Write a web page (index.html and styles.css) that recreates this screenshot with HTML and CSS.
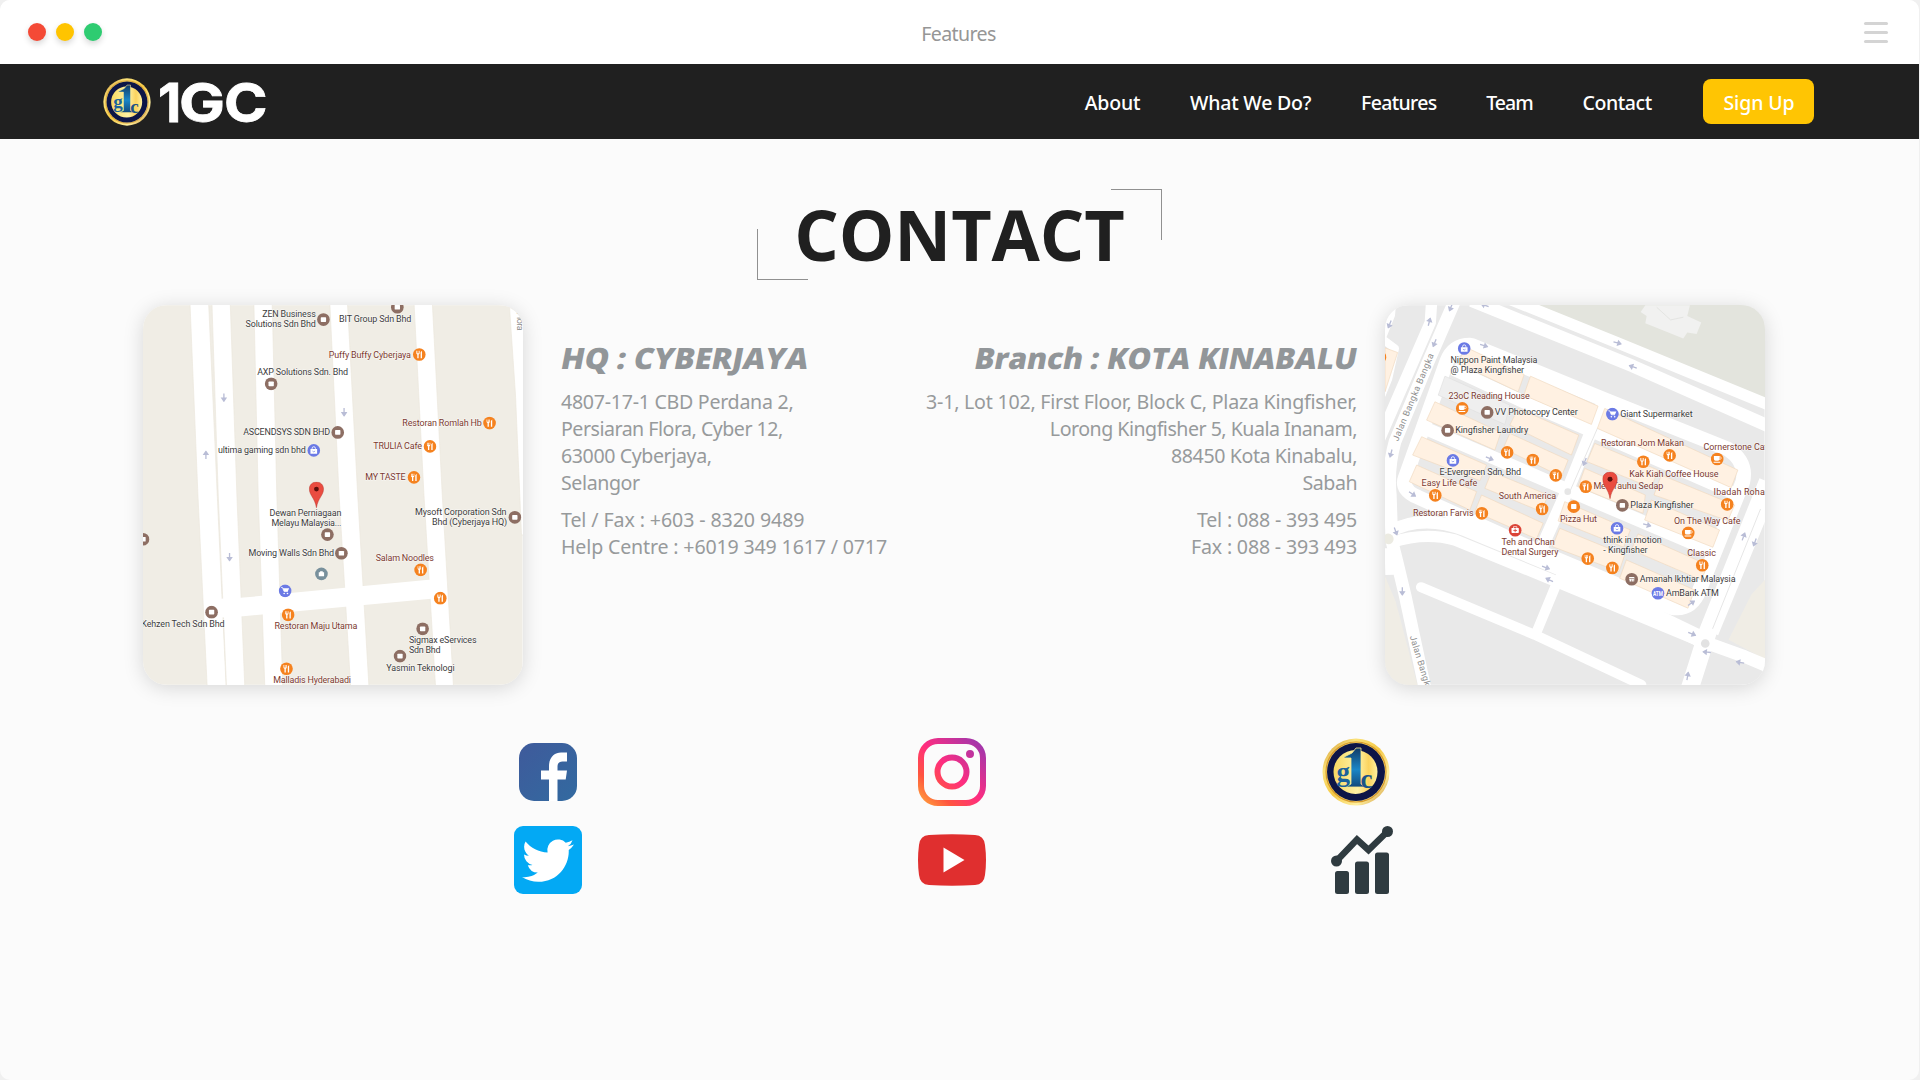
FILE: index.html
```html
<!DOCTYPE html>
<html lang="en">
<head>
<meta charset="utf-8">
<title>Features</title>
<link rel="stylesheet" href="styles.css">
</head>
<body>
<svg class="defs" width="0" height="0" aria-hidden="true">
  <defs>
    <linearGradient id="gold" x1="0" y1="0" x2="1" y2="1"><stop offset="0" stop-color="#c98a22"/><stop offset=".25" stop-color="#fbe27a"/><stop offset=".5" stop-color="#f5c945"/><stop offset=".75" stop-color="#fff0a0"/><stop offset="1" stop-color="#c07c1b"/></linearGradient>
    <linearGradient id="face" x1="0" y1="0" x2="1" y2="0"><stop offset="0" stop-color="#f7d862"/><stop offset=".55" stop-color="#fff2a6"/><stop offset=".8" stop-color="#fbd35e"/><stop offset="1" stop-color="#fff0a0"/></linearGradient>
    <linearGradient id="blue" x1="0" y1="0" x2="0" y2="1"><stop offset="0" stop-color="#123a66"/><stop offset=".55" stop-color="#1a86c7"/><stop offset="1" stop-color="#134a7c"/></linearGradient>
    <symbol id="emblem" viewBox="0 0 68 68">
      <circle cx="34" cy="34" r="33.5" fill="url(#gold)"/>
      <circle cx="34" cy="34" r="30" fill="none" stroke="#d79a2b" stroke-width="1.2"/>
      <circle cx="34" cy="34" r="29" fill="#0d1547"/>
      <circle cx="33.500" cy="34" r="22" fill="url(#face)"/>
      <path d="M22 19 30 15 34 10h5v36l4 3H24l5-3V20h-7z" fill="url(#blue)" stroke="#fbe88f" stroke-width=".8"/>
      <text x="14.500" y="43" font-family="Liberation Serif, serif" font-weight="700" font-size="27" fill="#1b639b">g</text>
      <text x="38.500" y="49.500" font-family="Liberation Serif, serif" font-weight="700" font-size="27" fill="#1b5288">c</text>
    </symbol>
    <symbol id="food" viewBox="-20 -20 40 40" width="40" height="40"><circle r="19" fill="#f5821f"/><path d="M-9-11v7q0 3 3 4v11h4V0q3-1 3-4v-7h-2v7h-2v-7h-2v7h-2v-7zM4 11V1Q2-8 8-11V11z" fill="#fff"/></symbol>
    <symbol id="biz" viewBox="-20 -20 40 40" width="40" height="40"><circle r="19" fill="#8d6e63"/><rect x="-8" y="-7" width="16" height="14" rx="2" fill="#fff"/></symbol>
    <symbol id="bag" viewBox="-20 -20 40 40" width="40" height="40"><circle r="19" fill="#6b7ae5"/><path d="M-10-4H10V10H-10z" fill="#fff"/><path d="M-5-3v-3a5 5 0 0 1 10 0v3" fill="none" stroke="#fff" stroke-width="2.500"/><path d="M-4 2q4 5 8 0" fill="none" stroke="#6b7ae5" stroke-width="2"/></symbol>
    <symbol id="cart" viewBox="-20 -20 40 40" width="40" height="40"><circle r="19" fill="#6b7ae5"/><path d="M-12-10h4l5 12H8" fill="none" stroke="#fff" stroke-width="2.500"/><path d="M-7-8H12L8 1H-3z" fill="#fff"/><circle cx="-3" cy="8" r="2.500" fill="#fff"/><circle cx="7" cy="8" r="2.500" fill="#fff"/></symbol>
    <symbol id="cup" viewBox="-20 -20 40 40" width="40" height="40"><circle r="19" fill="#f5821f"/><path d="M-10-9H7v9q0 5-5 5h-7q-5 0-5-5zM-11 8H9v3h-20z" fill="#fff"/><circle cx="8" cy="-3" r="4" fill="none" stroke="#fff" stroke-width="2"/></symbol>
    <symbol id="pin" viewBox="0 0 46 82"><path d="M23 1C10 1 1 10 1 23c0 20 17 27 22 58 5-31 22-38 22-58C45 10 36 1 23 1z" fill="#ea4c40" stroke="#b8352c" stroke-width="1.500"/><circle cx="23" cy="23" r="7.500" fill="#5b0f0b"/></symbol>
    <symbol id="arrow" viewBox="-14 -14 28 28"><path d="M-12 0H6M2-6 11 0 2 6z" fill="#b9bdd6" stroke="#b9bdd6" stroke-width="4"/></symbol>
  </defs>
</svg>

<div class="window">
  <header class="titlebar">
    <div class="lights"><i class="light red"></i><i class="light yellow"></i><i class="light green"></i></div>
    <span class="title">Features</span>
    <div class="burger"><i></i><i></i><i></i></div>
  </header>

  <nav class="nav">
    <a class="brand">
      <svg class="brand-emblem" width="48" height="50"><use href="#emblem" width="48" height="50"/></svg>
      <svg class="brand-name" width="116" height="50" viewBox="0 0 116 50"><text y="44.500" x="2">1</text><text y="44.500" x="23" textLength="46" lengthAdjust="spacingAndGlyphs">G</text><text y="44.500" x="68" textLength="43.500" lengthAdjust="spacingAndGlyphs">C</text></svg>
    </a>
    <div class="links">
      <a class="s2">About</a>
      <a class="s2">What We Do?</a>
      <a class="s7">Features</a>
      <a class="s10">Team</a>
      <a class="s4">Contact</a>
    </div>
    <a class="signup s1">Sign Up</a>
  </nav>

  <main class="page">
    <h1 class="heading">CONTACT</h1>

    <section class="offices">
      <svg class="map" viewBox="39 30 1140 1140">
        <rect x="39" y="30" width="1140" height="1140" fill="#f0ede5"/>
        <g fill="#fff" stroke="#ebe7dd" stroke-width="2">
          <path d="M180 20 204 600 232 1180H289L262 600 236 20z"/>
          <path d="M246 20 265 600 290 1180H345L321 600 301 20z"/>
          <path d="M372 20 385 600 405 1180H459L441 600 427 20z"/>
          <path d="M600 20 628 600 663 1180H718L684 600 653 20z"/>
          <path d="M853 20 883 600 918 1180H972L938 600 908 20z"/>
          <path d="M1140 36Q1160 44 1168 60L1190 60V720H1176L1158 300z"/>
        </g>
        <path d="M270 912 332 909 905 854 905 912 332 965 275 968z" fill="#fff"/>
        <g>
          <use href="#arrow" x="-14" y="-14" width="28" height="28" transform="translate(282 307) rotate(90)"/>
          <use href="#arrow" x="-14" y="-14" width="28" height="28" transform="translate(643 351) rotate(90)"/>
          <use href="#arrow" x="-14" y="-14" width="28" height="28" transform="translate(228 480) rotate(-90)"/>
          <use href="#arrow" x="-14" y="-14" width="28" height="28" transform="translate(299 786) rotate(90)"/>
        </g>
        <g>
          <use href="#biz" x="561" y="53"/><use href="#biz" x="783" y="16"/><use href="#food" x="849" y="158"/><use href="#biz" x="404" y="246"/><use href="#biz" x="604" y="392"/><use href="#bag" x="532" y="446"/><use href="#food" x="1060" y="364"/><use href="#food" x="881" y="434"/><use href="#food" x="833" y="527"/>
          <use href="#biz" x="1136" y="647"/><use href="#biz" x="573" y="699"/><use href="#biz" x="19" y="713"/><use href="#biz" x="615" y="755"/><use href="#food" x="853" y="805"/><use href="#cart" x="446" y="868"/><use href="#food" x="912" y="890"/><use href="#biz" x="225" y="932"/><use href="#food" x="455" y="940"/><use href="#biz" x="859" y="982"/><use href="#biz" x="791" y="1064"/><use href="#food" x="450" y="1102"/>
        </g>
        <circle cx="575" cy="837" r="19" fill="#78909c"/><path d="M567 832h4v-3h8v3h4v12h-16z" fill="#fff"/>
        <g class="label">
          <text x="397" y="65" textLength="161">ZEN Business</text><text x="347" y="95" textLength="211">Solutions Sdn Bhd</text>
          <text x="628" y="80" textLength="217">BIT Group Sdn Bhd</text><text x="382" y="239" textLength="273">AXP Solutions Sdn. Bhd</text>
          <text x="340" y="421" textLength="261">ASCENDSYS SDN BHD</text><text x="264" y="475" textLength="264">ultima gaming sdn bhd</text>
          <text x="419" y="662" textLength="216">Dewan Perniagaan</text><text x="425" y="692" textLength="210">Melayu Malaysia...</text>
          <text x="856" y="660" textLength="275">Mysoft Corporation Sdn</text><text x="907" y="690" textLength="226">Bhd (Cyberjaya HQ)</text>
          <text x="356" y="783" textLength="257">Moving Walls Sdn Bhd</text><text x="34" y="996" textLength="250">Kehzen Tech Sdn Bhd</text>
          <text x="838" y="1046" textLength="203">Sigmax eServices</text><text x="838" y="1076" textLength="95">Sdn Bhd</text><text x="770" y="1128" textLength="205">Yasmin Teknologi</text>
        </g>
        <g class="label eat">
          <text x="597" y="187" textLength="247">Puffy Buffy Cyberjaya</text><text x="818" y="392" textLength="239">Restoran Romlah Hb</text>
          <text x="731" y="462" textLength="146">TRULIA Cafe</text><text x="707" y="556" textLength="121">MY TASTE</text>
          <text x="738" y="797" textLength="175">Salam Noodles</text><text x="434" y="1004" textLength="249">Restoran Maju Utama</text><text x="430" y="1166" textLength="234">Malladis Hyderabadi</text>
        </g>
        <text class="road" transform="translate(1162 52) rotate(90)" textLength="54">Flora</text>
        <use href="#pin" x="537" y="560" width="46" height="79"/>
      </svg>

      <address class="office">
        <h2><svg width="246" height="40"><text transform="translate(-1.5 30) skewX(-11)" textLength="247" lengthAdjust="spacingAndGlyphs">HQ : CYBERJAYA</text></svg></h2>
        <p><span class="s3">4807-17-1 CBD Perdana 2,</span><br><span class="s5">Persiaran Flora, Cyber 12,</span><br><span class="s4">63000 Cyberjaya,</span><br><span class="s4">Selangor</span></p>
        <p><span class="s1">Tel / Fax : +603 - 8320 9489</span><br><span class="s16">Help Centre : +6019 349 1617 / 0717</span></p>
      </address>

      <address class="office right">
        <h2><svg width="384" height="40"><text transform="translate(0 30) skewX(-11)" textLength="382" lengthAdjust="spacingAndGlyphs">Branch : KOTA KINABALU</text></svg></h2>
        <p><span class="s23">3-1, Lot 102, First Floor, Block C, Plaza Kingfisher,</span><br><span class="s5">Lorong Kingfisher 5, Kuala Inanam,</span><br><span class="s4">88450 Kota Kinabalu,</span><br><span class="s5">Sabah</span></p>
        <p><span class="s2">Tel : 088 - 393 495</span><br><span class="s2">Fax : 088 - 393 493</span></p>
      </address>

      <svg class="map" viewBox="30 30 1140 1140">
        <rect x="30" y="30" width="1140" height="1140" fill="#e9e9e9"/>
        <path d="M470 20H1180V330z" fill="#e3e4dd"/>
        <path d="M812 30H946L938 62 980 82 966 116 938 112 926 130 812 84 816 62 798 50z" fill="#f1f1f0"/><path d="M846 36 888 74 926 66" fill="none" stroke="#dddeda" stroke-width="2"/>
        <path d="M20 820 62 920 130 1180H20zM1180 845 1130 900 1062 1035 1110 1060 1180 1098z" fill="#f0ede5"/>
        <g fill="none" stroke="#fff" stroke-width="40" stroke-linejoin="round">
          <path d="M410 14 728 143 1180 328" stroke-width="34"/>
          <path d="M290 16 775 213 1180 392" stroke-width="38"/>
          <path d="M170 20 166 82 45 360 10 440" stroke-width="34"/>
          <path d="M238 20 160 200 60 440Q38 520 46 600L50 720" stroke-width="38"/>
          <path d="M52 20 48 60 20 130 60 160 40 250 20 300" stroke-width="24"/>
          <path d="M90 550 215 200Q235 148 290 150L700 318 1060 462Q1118 500 1105 560L975 885Q950 948 890 938L480 765 130 607Q78 585 90 550z" stroke-width="44"/>
          <path d="M140 395 580 585 1020 772"/><path d="M235 222 450 322 660 412 1090 600" stroke-width="38"/><path d="M686 318 585 570 500 760" stroke-width="38"/>
          <path d="M40 712Q140 655 270 705L560 825 990 1045" stroke-width="38"/><path d="M50 742Q150 710 240 735L550 862 990 1045" stroke-width="34"/>
          <path d="M550 825 995 1040" stroke-width="50"/>
          <path d="M1180 560 1000 1010 946 1180" stroke-width="54"/><path d="M1190 590 1015 1015" stroke-width="34"/>
          <path d="M985 1040 1110 1085 1180 1115" stroke-width="38"/>
          <path d="M138 877 480 1020 800 1170" stroke-width="30" stroke-linecap="round"/><path d="M552 850 484 1015" stroke-width="30"/>
          <path d="M46 720 66 800 90 900 150 1180" stroke-width="38"/><path d="M42 760 44 840" stroke-width="26"/>
        </g>
        <path d="M1158 642 1014 1002M668 400 586 588" stroke="#e6e6e6" stroke-width="3"/>
        <g class="building">
          <path d="M270 155 448 238 430 290 250 205zM467 243 670 333 650 388 447 300zM180 320 378 412 360 465 155 375zM430 340 612 420 590 480 405 390zM405 415 580 495 560 545 385 460zM140 425 335 510 315 557 113 480zM125 510 305 590 285 645 103 560zM350 530 520 600 500 650 330 580zM320 600 505 685 485 732 300 650z"/>
          <path d="M690 340 1090 525 1070 578 668 400zM660 445 850 525 830 578 637 500zM630 520 812 600 805 655 610 575zM860 540 1080 630 1060 677 838 600zM830 615 1035 705 1015 757 810 675zM570 620 767 705 747 757 550 678zM555 700 750 780 733 830 533 755zM790 717 1000 810 980 855 770 765zM755 795 960 885 940 940 735 850zM30 158 68 172 30 290z"/>
        </g>
        <path d="M210 243 405 330 390 388 190 300z" fill="#efefef" stroke="#dfdfdf" stroke-width="2"/>
        <circle cx="40" cy="732" r="16" fill="#ecebe2"/><circle cx="579" cy="590" r="10" fill="#e6e6e6"/><circle cx="992" cy="1046" r="13" fill="#e2e2e2"/>
        <g>
          <use href="#arrow" x="-14" y="-14" width="28" height="28" transform="translate(728 143) rotate(15)"/><use href="#arrow" x="-14" y="-14" width="28" height="28" transform="translate(775 215) rotate(200)"/><use href="#arrow" x="-14" y="-14" width="28" height="28" transform="translate(327 151) rotate(18)"/><use href="#arrow" x="-14" y="-14" width="28" height="28" transform="translate(330 30) rotate(200)"/><use href="#arrow" x="-14" y="-14" width="28" height="28" transform="translate(163 80) rotate(-75)"/><use href="#arrow" x="-14" y="-14" width="28" height="28" transform="translate(179 143) rotate(112)"/><use href="#arrow" x="-14" y="-14" width="28" height="28" transform="translate(228 36) rotate(112)"/><use href="#arrow" x="-14" y="-14" width="28" height="28" transform="translate(44 87) rotate(112)"/><use href="#arrow" x="-14" y="-14" width="28" height="28" transform="translate(48 475) rotate(105)"/><use href="#arrow" x="-14" y="-14" width="28" height="28" transform="translate(344 490) rotate(22)"/><use href="#arrow" x="-14" y="-14" width="28" height="28" transform="translate(630 500) rotate(112)"/><use href="#arrow" x="-14" y="-14" width="28" height="28" transform="translate(112 597) rotate(35)"/><use href="#arrow" x="-14" y="-14" width="28" height="28" transform="translate(62 709) rotate(70)"/><use href="#arrow" x="-14" y="-14" width="28" height="28" transform="translate(82 889) rotate(90)"/><use href="#arrow" x="-14" y="-14" width="28" height="28" transform="translate(817 690) rotate(15)"/><use href="#arrow" x="-14" y="-14" width="28" height="28" transform="translate(513 818) rotate(20)"/><use href="#arrow" x="-14" y="-14" width="28" height="28" transform="translate(524 855) rotate(205)"/><use href="#arrow" x="-14" y="-14" width="28" height="28" transform="translate(952 1017) rotate(22)"/><use href="#arrow" x="-14" y="-14" width="28" height="28" transform="translate(997 1072) rotate(185)"/><use href="#arrow" x="-14" y="-14" width="28" height="28" transform="translate(1097 1103) rotate(190)"/><use href="#arrow" x="-14" y="-14" width="28" height="28" transform="translate(939 1144) rotate(-80)"/><use href="#arrow" x="-14" y="-14" width="28" height="28" transform="translate(950 925) rotate(-35)"/><use href="#arrow" x="-14" y="-14" width="28" height="28" transform="translate(1107 725) rotate(-70)"/><use href="#arrow" x="-14" y="-14" width="28" height="28" transform="translate(1141 742) rotate(110)"/>
        </g>
        <g>
          <use href="#bag" x="248" y="140"/><use href="#cup" x="242" y="320"/><use href="#biz" x="317" y="332"/><use href="#biz" x="198" y="386"/><use href="#food" x="377" y="452"/><use href="#food" x="454" y="475"/><use href="#food" x="523" y="521"/><use href="#bag" x="214" y="476"/><use href="#cart" x="693" y="337"/><use href="#food" x="865" y="461"/><use href="#food" x="786" y="480"/><use href="#cup" x="1008" y="472"/><use href="#food" x="613" y="555"/><use href="#food" x="161" y="581"/><use href="#food" x="-5" y="166"/>
          <use href="#food" x="301" y="635"/><use href="#food" x="482" y="622"/><use href="#biz" x="723" y="611"/><use href="#food" x="1038" y="608"/><use href="#cup" x="921" y="694"/><use href="#bag" x="707" y="680"/><use href="#food" x="619" y="771"/><use href="#food" x="693" y="799"/><use href="#food" x="963" y="791"/><use href="#biz" x="751" y="833"/>
        </g>
        <path d="M763 851h16M764 854v8M771 854v8M778 854v8" stroke="#8d6e63" stroke-width="2"/>
        <circle cx="597" cy="635" r="19" fill="#f5821f"/><rect x="589" y="627" width="16" height="15" rx="2" fill="#fff"/>
        <circle cx="421" cy="706" r="19" fill="#db4437"/><rect x="410" y="699" width="22" height="15" rx="2" fill="#fff"/><path d="M421 701v11M415.500 706.500h11" fill="none" stroke="#db4437" stroke-width="2.500"/><path d="M416 699v-4h10v4" fill="none" stroke="#fff" stroke-width="2"/>
        <circle cx="850" cy="895" r="19" fill="#6b7ae5"/><text class="atm" x="835" y="903" textLength="30" lengthAdjust="spacingAndGlyphs">ATM</text>
        <g class="label">
          <text x="227" y="205" textLength="261">Nippon Paint Malaysia</text><text x="227" y="235" textLength="221">@ Plaza Kingfisher</text><text x="360" y="360" textLength="249">VV Photocopy Center</text><text x="241" y="414" textLength="219">Kingfisher Laundry</text><text x="194" y="541" textLength="245">E-Evergreen Sdn, Bhd</text><text x="737" y="366" textLength="217">Giant Supermarket</text>
          <text x="767" y="640" textLength="190">Plaza Kingfisher</text><text x="686" y="744" textLength="175">think in motion</text><text x="686" y="775" textLength="133">- Kingfisher</text><text x="795" y="862" textLength="288">Amanah Ikhtiar Malaysia</text><text x="874" y="904" textLength="159">AmBank ATM</text>
        </g>
        <g class="label eat">
          <text x="221" y="311" textLength="244">23oC Reading House</text><text x="679" y="452" textLength="249">Restoran Jom Makan</text><text x="987" y="464" textLength="206">Cornerstone Cafe</text><text x="764" y="545" textLength="268">Kak Kiah Coffee House</text><text x="656" y="583" textLength="210">Mee Tauhu Sedap</text><text x="140" y="573" textLength="167">Easy Life Cafe</text><text x="1017" y="599" textLength="176">Ibadah Rohani</text><text x="372" y="613" textLength="172">South America</text><text x="114" y="664" textLength="182">Restoran Farvis</text><text x="556" y="680" textLength="111">Pizza Hut</text><text x="898" y="686" textLength="200">On The Way Cafe</text><text x="380" y="750" textLength="160">Teh and Chan</text><text x="380" y="780" textLength="171">Dental Surgery</text><text x="938" y="782" textLength="86">Classic</text>
        </g>
        <text class="road" transform="translate(69 440) rotate(-67.500)" textLength="282">Jalan Bangka Bangka</text>
        <text class="road" transform="translate(104 1025) rotate(73)" textLength="172">Jalan Bangka</text>
        <use href="#pin" x="683" y="530" width="46" height="82"/>
      </svg>
    </section>

    <section class="social">
      <svg width="60" height="60" viewBox="0 0 60 60"><defs><linearGradient id="fb" x1="0" y1="0" x2="1" y2="1"><stop offset="0" stop-color="#3f5a9b"/><stop offset="1" stop-color="#326aa0"/></linearGradient></defs><rect x="1" y="1" width="58" height="58" rx="15" fill="url(#fb)"/><path d="M31 59V37.500h-8v-9h8V24c0-9 6-13.500 12-13.500h6v9h-4.500c-3.500 0-5 2-5 5v4H49l-1.300 9h-8.200V59z" fill="#fff"/></svg>
      <svg width="68" height="68" viewBox="0 0 68 68"><defs><linearGradient id="ig" x1="0" y1="1" x2="1" y2="0"><stop offset="0" stop-color="#ffb03a"/><stop offset=".25" stop-color="#ff543f"/><stop offset=".5" stop-color="#ff2d80"/><stop offset="1" stop-color="#9038b4"/></linearGradient></defs><path fill="url(#ig)" fill-rule="evenodd" d="M20 0h28a20 20 0 0 1 20 20v28a20 20 0 0 1-20 20H20A20 20 0 0 1 0 48V20A20 20 0 0 1 20 0zm0 6A14 14 0 0 0 6 20v28a14 14 0 0 0 14 14h28a14 14 0 0 0 14-14V20A14 14 0 0 0 48 6zM34 16.500a17.500 17.500 0 1 1 0 35 17.500 17.500 0 0 1 0-35zm0 6a11.500 11.500 0 1 0 0 23 11.500 11.500 0 0 0 0-23zM52 12a4 4 0 1 1 0 8 4 4 0 0 1 0-8z"/></svg>
      <svg width="68" height="68"><use href="#emblem" width="68" height="68"/></svg>
      <svg width="68" height="68" viewBox="0 0 68 68"><rect width="68" height="68" rx="9" fill="#03a9f4"/><path transform="translate(8 8.600) scale(2.170)" fill="#fff" d="M23.950 4.570a10 10 0 0 1-2.820.780 4.960 4.960 0 0 0 2.160-2.730c-.950.550-2 .960-3.130 1.180a4.920 4.920 0 0 0-8.380 4.480C7.690 8.100 4.070 6.130 1.640 3.160a4.820 4.820 0 0 0-.670 2.480c0 1.710.870 3.210 2.190 4.100a4.900 4.900 0 0 1-2.230-.620v.060a4.920 4.920 0 0 0 3.950 4.830 5 5 0 0 1-2.210.080 4.940 4.940 0 0 0 4.600 3.420A9.870 9.870 0 0 1 0 19.540a14 14 0 0 0 7.550 2.210c9.050 0 14-7.500 14-13.980 0-.210 0-.420-.020-.630a9.940 9.940 0 0 0 2.420-2.570z"/></svg>
      <svg width="68" height="52" viewBox="0 0 68 52"><path d="M11 1Q34-.5 57 1 66 1.500 67 11 69 26 67 41 66 50.500 57 51 34 52.500 11 51 2 50.500 1 41-1 26 1 11 2 1.500 11 1z" fill="#e02f2f"/><path d="M25.500 13.500 46.500 26l-21 12.500z" fill="#fff"/></svg>
      <svg class="chart" width="62" height="68" viewBox="0 0 62 68"><g fill="#2f3b40"><rect x="4" y="45" width="14" height="23" rx="2.500"/><rect x="24" y="35.500" width="14" height="32.500" rx="2.500"/><rect x="44" y="26.500" width="14" height="41.500" rx="2.500"/><circle cx="5.500" cy="35" r="5.500"/><circle cx="56.500" cy="5.500" r="5.500"/></g><path d="M5.500 35 26 13.500 37.500 24 56.500 5.500" fill="none" stroke="#2f3b40" stroke-width="6.500"/></svg>
    </section>
  </main>
</div>
</body>
</html>
```
FILE: styles.css
```css
* { box-sizing: border-box; }
body { margin: 0; background: #f0f0f0; font-family: "Noto Sans", "Open Sans", sans-serif; font-size: 19.6px; line-height: 27px; color: #979a9b; }
.defs { position: absolute; }
.window { width: 1919px; height: 1080px; border-radius: 10px; overflow: hidden; background: #fbfbfb; }

/* tracking steps */
.s1 { letter-spacing: -.1px; }
.s16 { letter-spacing: -.16px; }
.s2 { letter-spacing: -.18px; }
.s23 { letter-spacing: -.226px; }
.s3 { letter-spacing: -.275px; }
.s4 { letter-spacing: -.4px; }
.s5 { letter-spacing: -.5px; }
.s7 { letter-spacing: -.68px; }
.s10 { letter-spacing: -.97px; }

.titlebar { display: grid; grid-template-columns: 1fr auto 1fr; align-items: center; height: 64px; padding: 0 31px 0 28px; background: #fff; }
.lights { display: flex; gap: 10px; }
.light { width: 18px; height: 18px; border-radius: 50%; box-shadow: 0 3px 6px rgba(0, 0, 0, .16); }
.red { background: #f44a36; }
.yellow { background: #ffc400; }
.green { background: #2ecc71; }
.title { padding: 3px 0 0 1px; color: #969696; letter-spacing: -.6px; }
.burger { display: grid; gap: 6px; justify-self: end; padding-top: 1px; }
.burger i { width: 24px; height: 3px; border-radius: 1.5px; background: #d4d4d4; }

.nav { display: flex; align-items: center; height: 75px; padding: 0 105px 0 103px; background: #202020; color: #fff; font-size: 19.5px; font-weight: 500; }
.brand { display: flex; gap: 5px; margin-right: auto; }
.brand-name { overflow: visible; }
.brand-name text { font: 700 54px Inter, sans-serif; fill: #fff; stroke: #fff; stroke-width: .8px; }
.links { display: flex; gap: 49.7px; margin-right: 51.2px; padding-top: 1px; }
.signup { display: grid; place-items: center; width: 111px; height: 45px; padding: 1px 0 0 1px; border-radius: 8px; background: #ffc503; }

.page { padding-top: 50px; }
.heading { position: relative; width: 405px; height: 91px; margin: 0 auto 25px; font: 700 70px/91px "Open Sans", sans-serif; color: #202020; text-align: center; letter-spacing: -.1px; }
.heading::before, .heading::after { content: ""; box-sizing: border-box; position: absolute; width: 51px; height: 51px; border: 0 solid #909090; }
.heading::before { left: 0; bottom: 0; border-width: 0 0 1px 1px; }
.heading::after { right: 0; top: 0; border-width: 1px 1px 0 0; }

.offices { display: flex; padding: 0 154.5px 0 143px; }
.map { flex: none; width: 379.5px; height: 380px; border-radius: 24px; box-shadow: 0 3px 20px rgba(0, 0, 0, .15); }
.label text { font: 27px Roboto, sans-serif; fill: #3c3c3c; paint-order: stroke; stroke: #ffffffb0; stroke-width: 3px; }
.label.eat text { fill: #7c3a30; }
.road { font: 27px Roboto, sans-serif; fill: #8f8f8f; }
.atm { font: 700 20px Roboto, sans-serif; fill: #fff; }
.building path { fill: #fff1e2; stroke: #f0d9c0; stroke-width: 2px; }
.office { flex: 1; padding: 34px 0 0 38.5px; font-style: normal; white-space: nowrap; }
.office.right { padding: 34px 28px 0 0; text-align: right; }
.office h2 { display: flex; height: 40px; margin: 0 0 9px; }
.office.right h2 { justify-content: flex-end; }
.office h2 svg { overflow: visible; }
.office h2 text { font: 800 29.5px "Open Sans", sans-serif; fill: #929699; }
.office p { margin: 0 0 10px; }

.social { display: grid; grid-template-columns: repeat(3, 404px); grid-auto-rows: 68px; row-gap: 20px; place-items: center; padding: 53px 0 0 346px; }
.chart { margin-left: 12px; }
```
